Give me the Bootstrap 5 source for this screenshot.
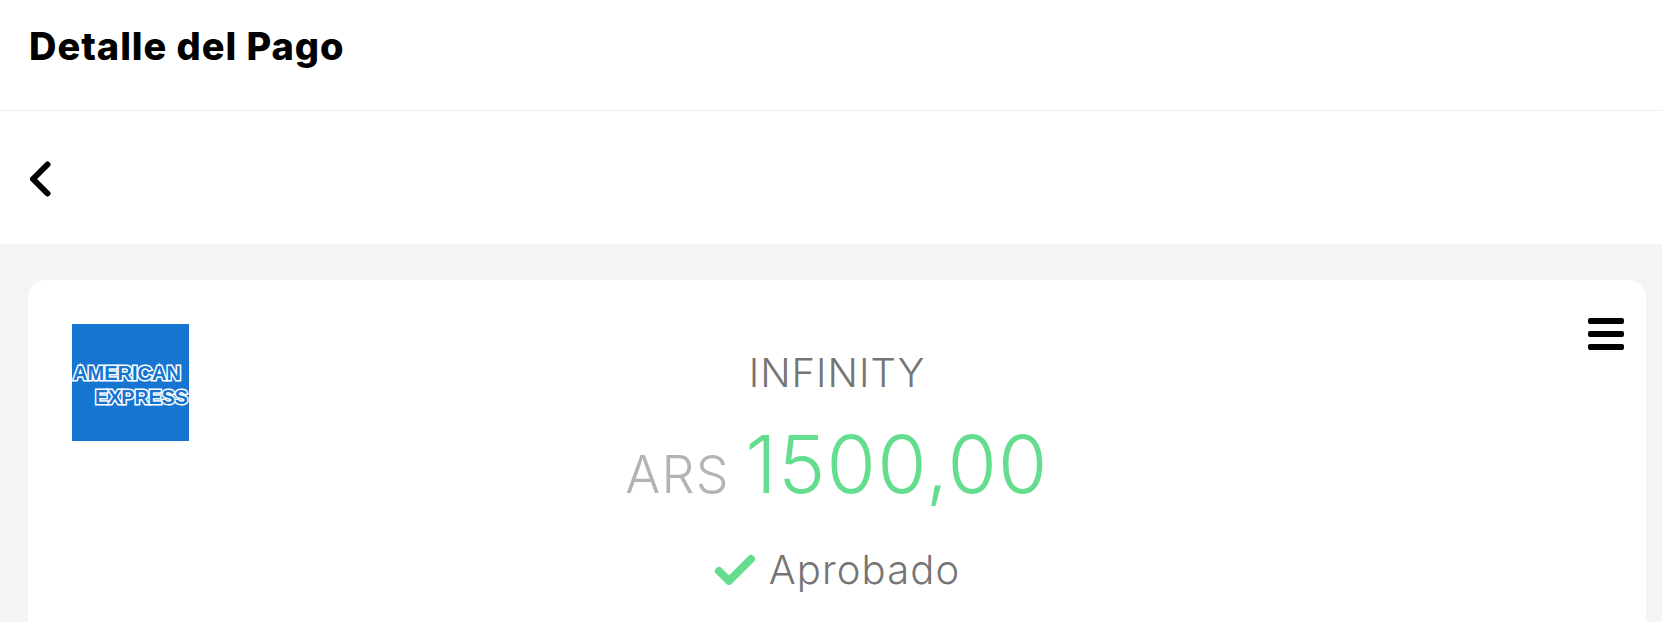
<!DOCTYPE html>
<html lang="es">
<head>
  <meta charset="UTF-8" />
  <title>Detalle del Pago</title>
  <link href="https://cdn.jsdelivr.net/npm/bootstrap@5.3.3/dist/css/bootstrap.min.css" rel="stylesheet" />
  <style>
    body {
      font-family: "Inter", "Liberation Sans", sans-serif;
      background-color: #f4f4f4;
      height: 100vh;
      overflow: hidden;
    }
    .page-head {
      height: 111px;
      padding: 0 0 17px 29px;
      border-bottom: 1px solid #eeeeee;
    }
    .page-title {
      font-size: 38px;
      font-weight: 800;
      letter-spacing: 0.95px;
      color: #000;
      margin: 0;
    }
    .back-bar {
      height: 133px;
      padding: 2px 0 0 29px;
    }
    .pay-area {
      height: calc(100vh - 244px);
      padding: 36px 16px 0 28px;
      overflow: hidden;
    }
    .pay-card {
      border: 0;
      border-radius: 18px;
      height: 500px;
    }
    .pay-grid {
      display: grid;
      grid-template-columns: 1fr auto 1fr;
      padding: 38px 22px 0;
    }
    .logo-cell {
      padding-left: 22px;
    }
    .amex-logo {
      width: 117px;
      height: 117px;
      margin-top: 6px;
      display: block;
      overflow: visible;
    }
    .amex-logo text {
      font-family: "Liberation Sans", sans-serif;
      font-weight: 700;
      font-size: 20px;
      fill: #1575d1;
      stroke: #fff;
      stroke-width: 3px;
      paint-order: stroke;
    }
    .brand-name {
      font-size: 40px;
      font-weight: 300;
      letter-spacing: 1px;
      color: #757575;
      line-height: 48px;
      margin-top: 31px;
    }
    .amount-line {
      line-height: 96px;
      margin-top: 19px;
      white-space: nowrap;
    }
    .amount-cur {
      font-size: 52px;
      font-weight: 300;
      letter-spacing: 1.2px;
      color: #b3b3b3;
    }
    .amount-num {
      font-size: 80px;
      font-weight: 300;
      letter-spacing: 1.2px;
      color: #64dd8f;
      margin-left: 11px;
    }
    .status-line {
      margin-top: 11px;
      gap: 13px;
      font-size: 40px;
      font-weight: 300;
      letter-spacing: 1.1px;
      color: #757575;
      line-height: 48px;
    }
  </style>
</head>
<body>
  <header class="page-head bg-white d-flex align-items-center">
    <h1 class="page-title">Detalle del Pago</h1>
  </header>

  <div class="back-bar bg-white d-flex align-items-center">
    <a href="#" aria-label="Volver" class="d-flex">
      <svg width="22" height="36" viewBox="0 0 22 36">
        <path d="M18.5 3.5 L4 18 L18.5 32.5" fill="none" stroke="#000" stroke-width="6" stroke-linecap="round" stroke-linejoin="round" />
      </svg>
    </a>
  </div>

  <main class="pay-area">
    <div class="card pay-card">
      <div class="pay-grid">
        <div class="logo-cell">
          <svg class="amex-logo" viewBox="0 0 117 117">
            <rect width="117" height="117" fill="#1575d1" />
            <text x="1" y="56" textLength="108" lengthAdjust="spacingAndGlyphs">AMERICAN</text>
            <text x="23" y="80" textLength="93" lengthAdjust="spacingAndGlyphs">EXPRESS</text>
          </svg>
        </div>
        <div class="text-center">
          <div class="brand-name">INFINITY</div>
          <div class="amount-line">
            <span class="amount-cur">ARS</span>
            <span class="amount-num">1500,00</span>
          </div>
          <div class="status-line d-flex align-items-center justify-content-center">
            <svg width="42" height="32" viewBox="0 0 42 32">
              <path d="M5 17 L15 27 L37 5" fill="none" stroke="#64dd8f" stroke-width="8" stroke-linecap="round" stroke-linejoin="round" />
            </svg>
            <span>Aprobado</span>
          </div>
        </div>
        <div class="d-flex justify-content-end align-items-start">
          <svg width="36" height="32" viewBox="0 0 36 32">
            <rect y="0" width="36" height="6" rx="2" fill="#000" />
            <rect y="13" width="36" height="6" rx="2" fill="#000" />
            <rect y="26" width="36" height="6" rx="2" fill="#000" />
          </svg>
        </div>
      </div>
    </div>
  </main>

  <script src="https://cdn.jsdelivr.net/npm/bootstrap@5.3.3/dist/js/bootstrap.bundle.min.js"></script>
</body>
</html>
